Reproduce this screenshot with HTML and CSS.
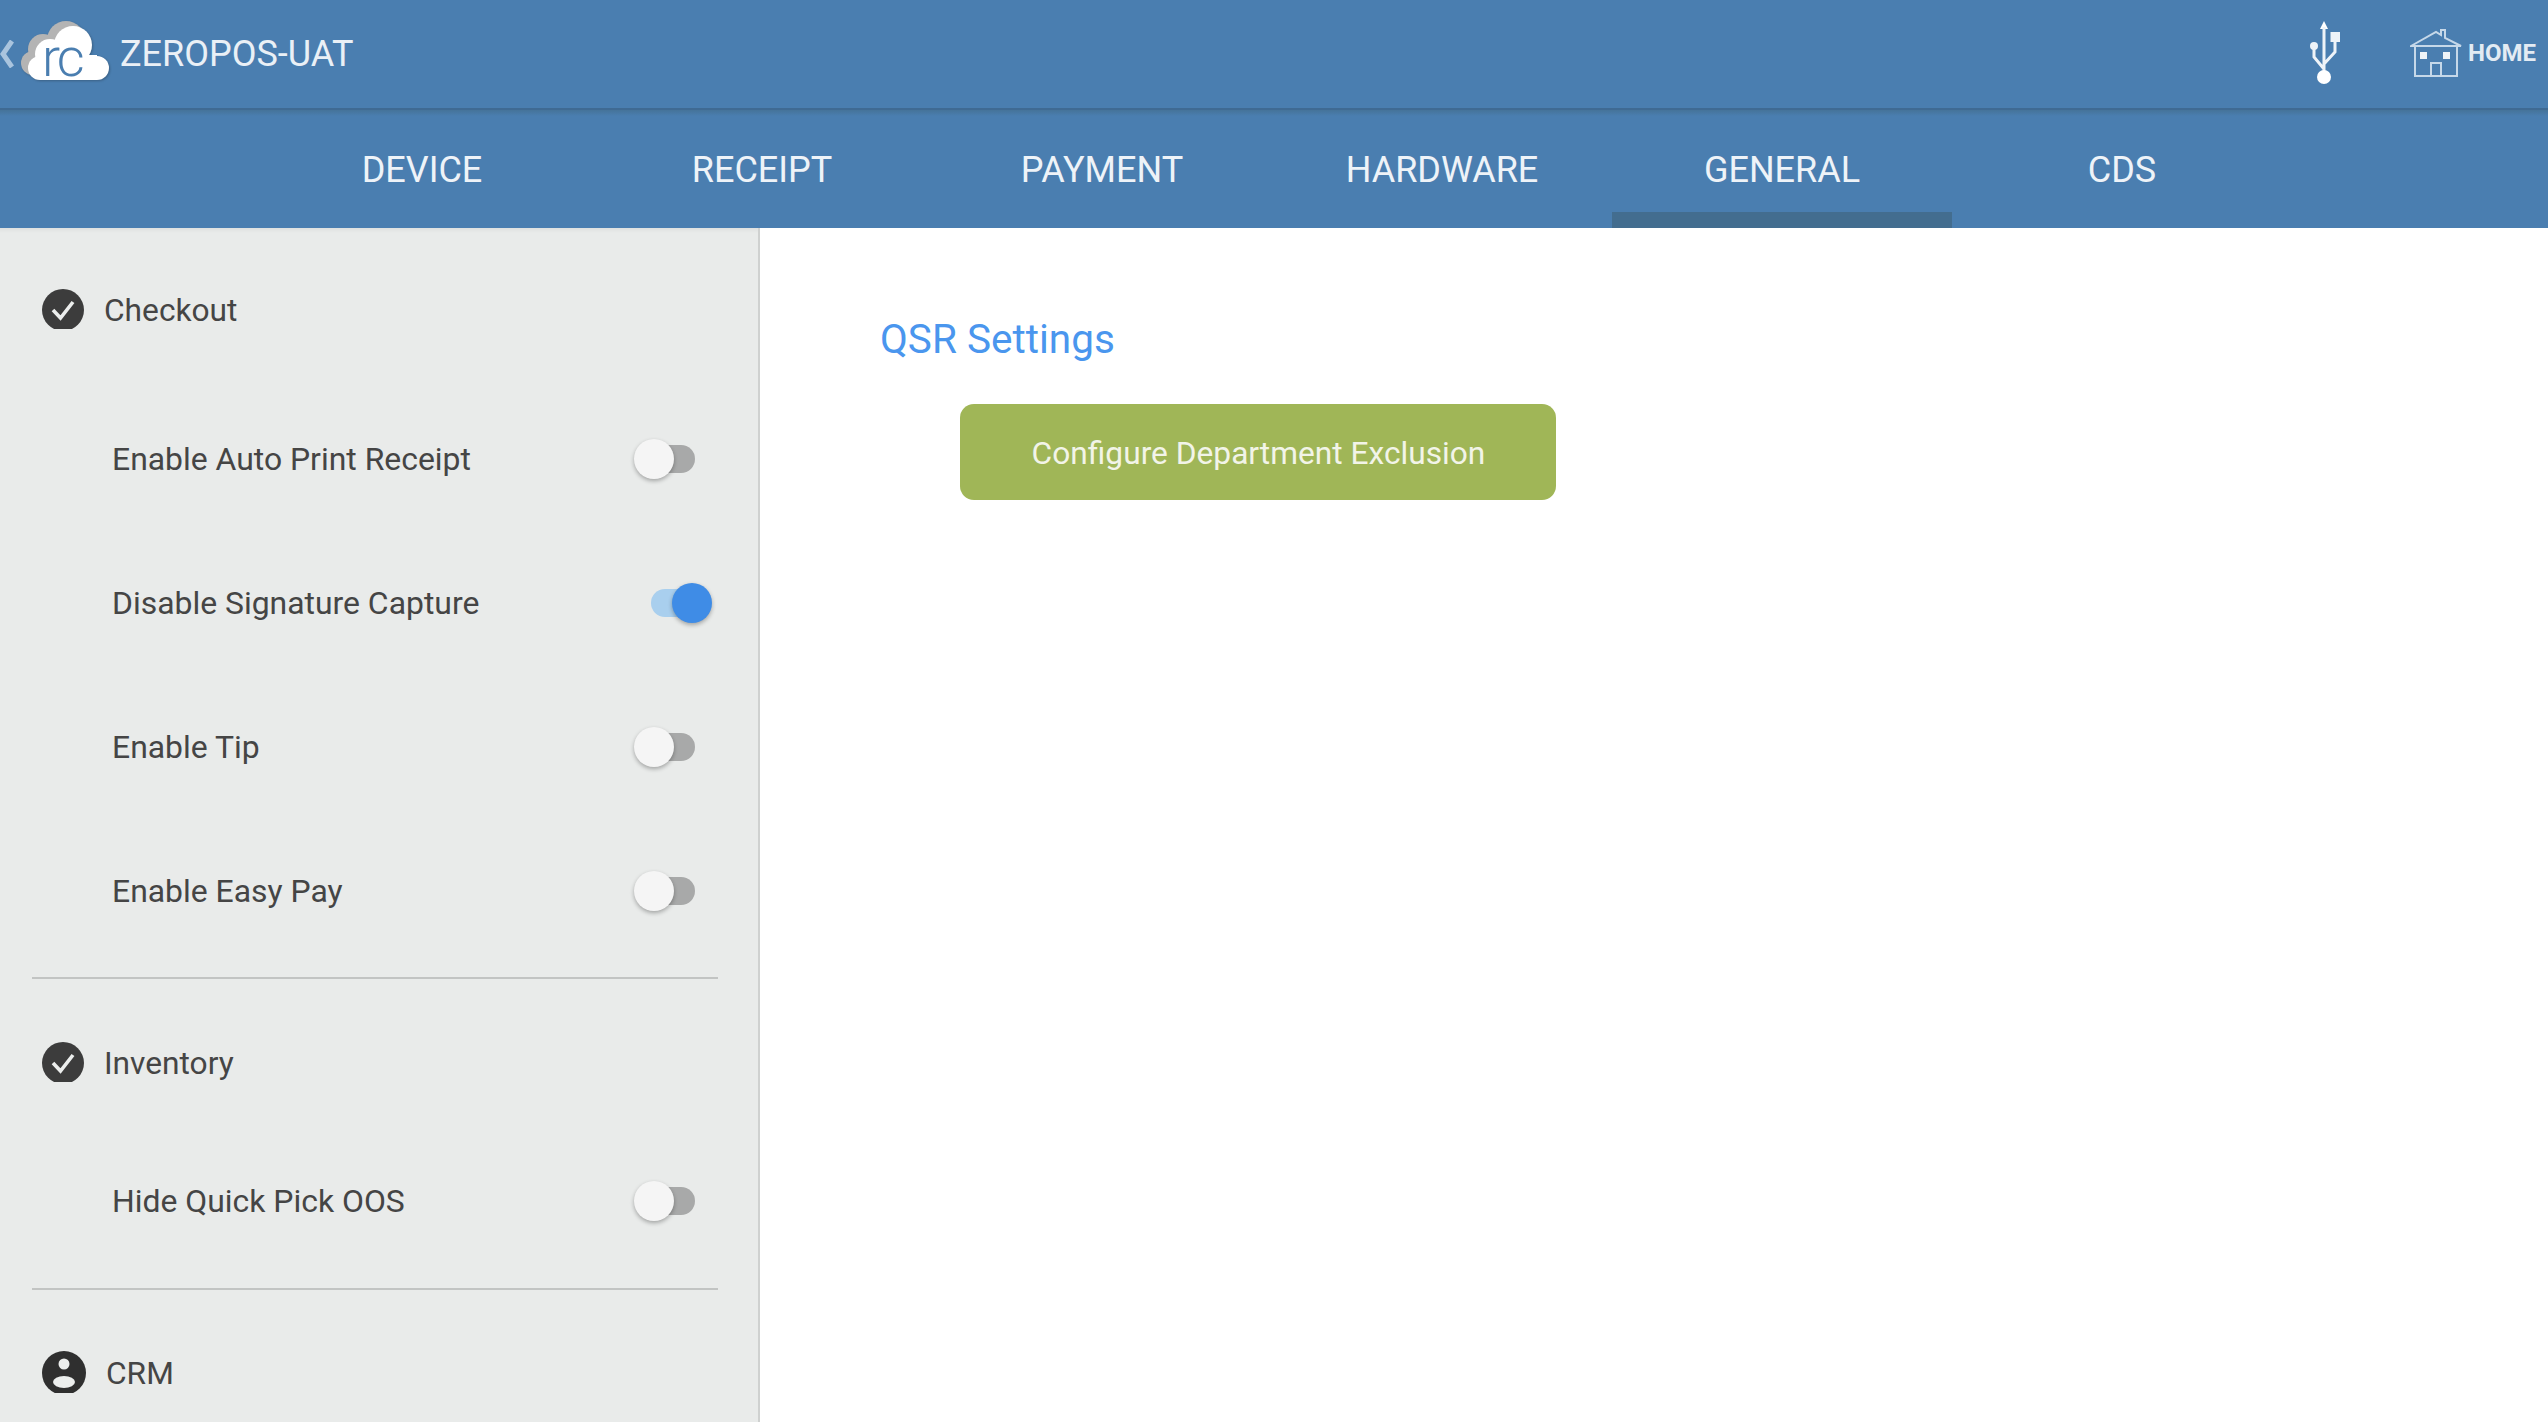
FILE: index.html
```html
<!DOCTYPE html>
<html lang="en">
<head>
<meta charset="utf-8">
<title>ZEROPOS-UAT Settings</title>
<link rel="stylesheet" href="styles.css">
</head>
<body>
<div class="app">
  <header class="topbar">
    <div class="brand">
      <svg class="chevron" viewBox="0 0 14 28" aria-hidden="true"><path d="M12 1 L3 14 L12 27" fill="none" stroke="#a9c4de" stroke-width="5"/></svg>
      <div class="logo-wrap">
        <svg class="logo" viewBox="0 0 92 62" aria-hidden="true">
          <g fill="#b4b4b4" transform="translate(-7,-5)">
            <circle cx="53" cy="24" r="19"/><circle cx="30" cy="33" r="15"/><circle cx="20" cy="47" r="12"/><rect x="20" y="34" width="40" height="25"/>
          </g>
          <g fill="#ffffff">
            <circle cx="53" cy="24" r="19"/><circle cx="30" cy="33" r="15"/><circle cx="20" cy="47" r="12"/><circle cx="77" cy="47" r="12"/><rect x="20" y="34" width="57" height="25"/>
          </g>
        </svg>
        <span class="logo-text">rc</span>
      </div>
      <span class="brand-name">ZEROPOS-UAT</span>
    </div>
    <div class="top-actions">
      <svg class="usb" viewBox="0 0 30 64" aria-hidden="true">
        <path d="M14 0 L10 8 H18 Z" fill="#fff"/>
        <path d="M14 6 V54 M25 20 V31 L14 43 M4 26 V36 L14 48" fill="none" stroke="#eef3f8" stroke-width="3"/>
        <rect x="20.5" y="11" width="9.5" height="10" fill="#eef3f8"/>
        <circle cx="4" cy="25" r="4" fill="#eef3f8"/>
        <circle cx="14" cy="56" r="7" fill="#fff"/>
      </svg>
      <div class="home">
        <svg class="house" viewBox="0 0 52 48" aria-hidden="true">
          <path d="M1 17 L26 3 L31 6 V1 H35 V9 L51 17 Z M5 17 V47 H47 V17 M21 47 V34 H31 V47" fill="none" stroke="#c6d8e9" stroke-width="2"/>
          <rect x="10" y="23" width="7" height="7" fill="#eef3f8"/>
          <rect x="33" y="23" width="7" height="7" fill="#eef3f8"/>
        </svg>
        <span class="home-label">HOME</span>
      </div>
    </div>
  </header>
  <nav class="tabs">
    <div class="tab">DEVICE</div>
    <div class="tab">RECEIPT</div>
    <div class="tab">PAYMENT</div>
    <div class="tab">HARDWARE</div>
    <div class="tab active">GENERAL</div>
    <div class="tab">CDS</div>
  </nav>
  <main class="body">
    <aside class="sidebar">
      <div class="group-head first">
        <svg class="group-icon" viewBox="0 0 42 40" aria-hidden="true"><circle cx="21" cy="21" r="21" fill="#3c3c3c"/><path d="M11 21 L18.5 29 L31 13" fill="none" stroke="#eceeed" stroke-width="3.6"/></svg>
        <span class="group-title">Checkout</span>
      </div>
      <div class="rows">
        <div class="row"><span class="row-label">Enable Auto Print Receipt</span><span class="toggle"><span class="thumb"></span></span></div>
        <div class="row"><span class="row-label">Disable Signature Capture</span><span class="toggle on"><span class="thumb"></span></span></div>
        <div class="row"><span class="row-label">Enable Tip</span><span class="toggle"><span class="thumb"></span></span></div>
        <div class="row"><span class="row-label">Enable Easy Pay</span><span class="toggle"><span class="thumb"></span></span></div>
      </div>
      <hr class="divider">
      <div class="group-head">
        <svg class="group-icon" viewBox="0 0 42 40" aria-hidden="true"><circle cx="21" cy="21" r="21" fill="#3c3c3c"/><path d="M11 21 L18.5 29 L31 13" fill="none" stroke="#eceeed" stroke-width="3.6"/></svg>
        <span class="group-title">Inventory</span>
      </div>
      <div class="rows single">
        <div class="row"><span class="row-label">Hide Quick Pick OOS</span><span class="toggle"><span class="thumb"></span></span></div>
      </div>
      <hr class="divider">
      <div class="group-head crm">
        <svg class="group-icon person" viewBox="0 0 44 42" aria-hidden="true"><circle cx="22" cy="22" r="22" fill="#2f2f2f"/><circle cx="22" cy="13" r="5.5" fill="#eceeed"/><ellipse cx="22" cy="31" rx="11" ry="6" fill="#eceeed"/></svg>
        <span class="group-title">CRM</span>
      </div>
    </aside>
    <section class="content">
      <h2 class="section-title">QSR Settings</h2>
      <button class="primary" type="button">Configure Department Exclusion</button>
    </section>
  </main>
</div>
</body>
</html>
```

FILE: styles.css
```css
* { box-sizing: border-box; }
html, body { margin: 0; height: 100%; }
body { font-family: Roboto, "Liberation Sans", sans-serif; background: #fff; overflow: hidden; }
.app { width: 2548px; height: 1422px; display: flex; flex-direction: column; overflow: hidden; }

.topbar {
  height: 110px;
  flex: none;
  background: #4a7eb0;
  border-bottom: 2px solid #3f6a93;
  display: flex;
  align-items: center;
  justify-content: space-between;
  padding-right: 12px;
}
.brand { display: flex; align-items: center; height: 108px; }
.chevron { width: 14px; height: 28px; }
.logo-wrap { position: relative; width: 92px; height: 62px; margin-left: 6px; margin-top: -4px; flex: none; }
.logo { display: block; width: 92px; height: 62px; filter: drop-shadow(1px 1px 1px rgba(40,60,80,.45)); }
.logo-text {
  position: absolute;
  left: 22px;
  top: 7px;
  font-weight: 300;
  font-size: 54px;
  line-height: 60px;
  letter-spacing: -3px;
  color: #4a7eb0;
}
.brand-name { font-size: 36px; color: #eaf0f6; margin-left: 8px; }
.top-actions { display: flex; align-items: center; }
.usb { width: 30px; height: 64px; margin-right: 70px; margin-top: -3px; }
.home { display: flex; align-items: center; margin-top: -2px; }
.house { width: 52px; height: 48px; }
.home-label { font-size: 24px; font-weight: 700; color: #e3ebf3; margin-left: 6px; }

.tabs {
  height: 118px;
  flex: none;
  background: linear-gradient(#457399 0, #4a7eb0 6px);
  display: flex;
  padding-left: 252px;
}
.tab {
  width: 340px;
  height: 118px;
  padding-top: 2px;
  display: flex;
  align-items: center;
  justify-content: center;
  font-size: 36px;
  color: #eef3f8;
}
.tab.active { border-bottom: 16px solid #436d8f; padding-top: 18px; }

.body { flex: 1; display: flex; min-height: 0; }
.sidebar {
  width: 760px;
  flex: none;
  background: linear-gradient(#dfe1e0 0, #e9ebea 5px);
  border-right: 2px solid #cfd1d0;
  padding: 32px 0 0 0;
  overflow: hidden;
}
.group-head { height: 100px; display: flex; align-items: center; padding-left: 42px; flex: none; margin-top: 34px; }
.group-head.first { margin-top: 0; }
.group-icon { width: 42px; height: 40px; flex: none; margin-top: -3px; }
.group-icon.person { width: 44px; height: 42px; margin-top: -4px; }
.group-title { font-size: 31.7px; color: #454545; margin-left: 20px; }
.crm .group-title { margin-top: -2px; }
.rows { margin-top: 27px; }
.rows.single { margin-top: 16px; }
.row { height: 144px; display: flex; align-items: center; padding-left: 112px; position: relative; }
.row-label { font-size: 31.9px; color: #454545; }
.toggle {
  position: absolute;
  left: 651px;
  top: 58px;
  width: 44px;
  height: 28px;
  border-radius: 14px;
  background: #a8a9a9;
}
.thumb {
  position: absolute;
  left: -17px;
  top: -6px;
  width: 40px;
  height: 40px;
  border-radius: 50%;
  background: #f5f5f5;
  box-shadow: 0 2px 4px rgba(0,0,0,.3);
}
.toggle.on { background: #a9cfee; }
.toggle.on .thumb { left: 21px; background: #3f8ce6; }
.divider { border: 0; height: 2px; margin: 14px 40px 0 32px; background: #c2c4c3; }
.rows.single + .divider { margin-top: 15px; }

.content { flex: 1; padding: 81px 0 0 120px; }
.section-title { font-size: 40.5px; font-weight: 400; color: #4a96ee; margin: 0; line-height: 60px; }
.primary {
  display: block;
  width: 596px;
  height: 96px;
  margin: 35px 0 0 80px;
  padding: 2px 0 0 1px;
  border: 0;
  border-radius: 14px;
  background: #a0b657;
  color: #f2f4e8;
  font-family: Roboto, sans-serif;
  font-size: 31.7px;
}
```
